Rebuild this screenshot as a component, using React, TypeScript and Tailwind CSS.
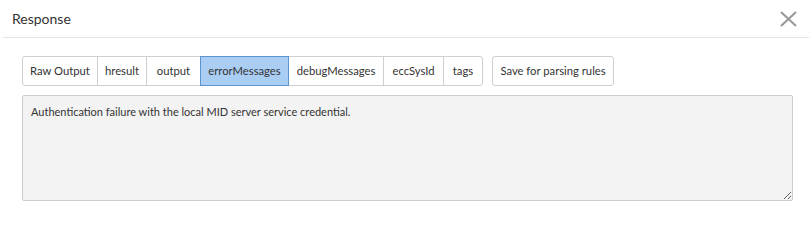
const tabs = [
  { label: 'Raw Output', w: 'w-[76px]' },
  { label: 'hresult', w: 'w-[50px]' },
  { label: 'output', w: 'w-[55px]' },
  { label: 'errorMessages', w: 'w-[89px]' },
  { label: 'debugMessages', w: 'w-[96px]' },
  { label: 'eccSysId', w: 'w-[61px]' },
  { label: 'tags', w: 'w-[40px]' },
];

export default function App() {
  const active = 'errorMessages';

  return (
    <div className="h-[227px] w-[812px] bg-white font-['Lato',sans-serif] text-[#333]">
      <div className="mx-[3px] flex h-[38px] items-center justify-between border-b border-[#e5e5e5] pl-[9px] pr-[12px]">
        <h2 className="text-[14px] text-[#333]">Response</h2>
        <svg width="17" height="16" viewBox="0 0 17 16" aria-hidden="true" className="text-[#9a9a9a]">
          <path d="M1 1 L16 15 M16 1 L1 15" stroke="currentColor" strokeWidth="2.2" fill="none" />
        </svg>
      </div>

      <div className="px-[22px] pt-[18px]">
        <div className="flex items-center gap-[9px]">
          <div className="flex">
            {tabs.map((t, i) => (
              <button
                key={t.label}
                type="button"
                className={
                  'h-[30px] border px-0 text-[11.25px] ' +
                  t.w +
                  ' ' +
                  (i > 0 ? '-ml-px ' : '') +
                  (i === 0 ? 'rounded-l-[3px] ' : '') +
                  (i === tabs.length - 1 ? 'rounded-r-[3px] ' : '') +
                  (t.label === active
                    ? 'relative z-10 border-[#5b95d0] bg-[#a9cdf3] text-[#333]'
                    : 'border-[#cfcfcf] bg-white text-[#333]')
                }
              >
                {t.label}
              </button>
            ))}
          </div>
          <button
            type="button"
            className="h-[30px] w-[122px] rounded-[3px] border border-[#cfcfcf] bg-white text-[11.25px] text-[#333]"
          >
            Save for parsing rules
          </button>
        </div>

        <textarea
          readOnly
          defaultValue="Authentication failure with the local MID server service credential."
          className="mt-[9px] block h-[106px] w-[771px] resize-y rounded-[2px] border border-[#cccccc] bg-[#f3f3f3] px-[8px] py-[8px] text-[11px] leading-[16px] text-[#333] outline-none"
        />
      </div>
    </div>
  );
}
